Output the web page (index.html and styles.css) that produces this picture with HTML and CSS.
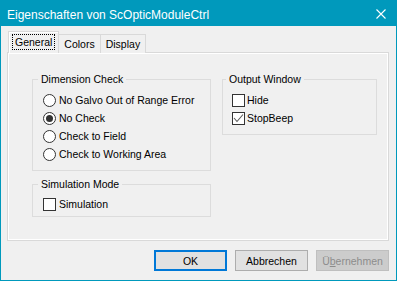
FILE: index.html
```html
<!DOCTYPE html>
<html lang="de">
<head>
  <meta charset="UTF-8">
  <title>Eigenschaften von ScOpticModuleCtrl</title>
  <link rel="stylesheet" href="styles.css">
</head>
<body>
  <div class="window">
    <div class="titlebar">
      <span class="title">Eigenschaften von ScOpticModuleCtrl</span>
      <svg class="close" width="10" height="10" viewBox="0 0 10 10">
        <path d="M0.5 0.5 L9.5 9.5 M9.5 0.5 L0.5 9.5" stroke="#fff" stroke-width="1.1" fill="none"/>
      </svg>
    </div>

    <div class="body">
      <div class="tabs">
        <div class="tab active"><span class="focus">General</span></div>
        <div class="tab">Colors</div>
        <div class="tab">Display</div>
      </div>

      <div class="page">
        <div class="col col-left">
          <fieldset class="group group-dim">
            <legend>Dimension Check</legend>
            <div class="opt"><span class="radio"></span>No Galvo Out of Range Error</div>
            <div class="opt"><span class="radio checked"></span>No Check</div>
            <div class="opt"><span class="radio"></span>Check to Field</div>
            <div class="opt"><span class="radio"></span>Check to Working Area</div>
          </fieldset>

          <fieldset class="group group-sim">
            <legend>Simulation Mode</legend>
            <div class="opt"><span class="check"></span>Simulation</div>
          </fieldset>
        </div>

        <div class="col col-right">
          <fieldset class="group group-out">
            <legend>Output Window</legend>
            <div class="opt"><span class="check"></span>Hide</div>
            <div class="opt">
              <span class="check">
                <svg width="11" height="11" viewBox="0 0 11 11">
                  <polyline points="1,5 4,8.5 10,1.5" stroke="#5a5a5a" stroke-width="1.1" fill="none"/>
                </svg>
              </span>StopBeep
            </div>
          </fieldset>
        </div>
      </div>

      <div class="buttons">
        <button class="btn btn-default">OK</button>
        <button class="btn">Abbrechen</button>
        <button class="btn" disabled>&Uuml;<u>b</u>ernehmen</button>
      </div>
    </div>
  </div>
</body>
</html>
```

FILE: styles.css
```css
* {
  box-sizing: border-box;
}

body {
  margin: 0;
  font-family: "Liberation Sans", Arial, sans-serif;
  font-size: 10.5px;
  color: #000;
}

.window {
  width: 397px;
  height: 281px;
  border: 1px solid #0099bc;
  background: #f0f0f0;
  display: flex;
  flex-direction: column;
}

.titlebar {
  height: 25px;
  background: #0099bc;
  color: #fff;
  display: flex;
  align-items: center;
  justify-content: space-between;
  padding: 2px 10px 0 6px;
  font-size: 12px;
}

.close {
  display: block;
  margin-top: -2px;
}

.body {
  padding: 6px 7px 0 6px;
}

/* tab strip */
.tabs {
  display: flex;
  align-items: flex-end;
  height: 21px;
  padding-left: 1px;
  margin-bottom: -1px;
  position: relative;
  z-index: 1;
}

.tab {
  height: 19px;
  line-height: 18px;
  padding: 0 5px;
  border: 1px solid #d9d9d9;
  border-bottom: none;
  background: #f0f0f0;
  margin-left: -1px;
}

.tab.active {
  height: 22px;
  padding: 1px 3px 0 3px;
  margin-left: 0;
  margin-right: -1px;
  background: #f0f0f0;
  box-shadow: inset 1px 1px 0 #fff;
}

.tab.active + .tab {
  margin-left: 0;
}

.focus {
  display: inline-block;
  line-height: 14px;
  padding: 0 2px;
  border: 1px dotted #000;
}

/* tab page */
.page {
  width: 382px;
  height: 189px;
  border: 1px solid #d9d9d9;
  box-shadow: inset 1px 1px 0 #fff, inset -1px -1px 0 #fff;
  display: flex;
  gap: 11px;
  padding: 20px 0 0 24px;
}

.col {
  display: flex;
  flex-direction: column;
  gap: 7px;
}

.col-left {
  width: 179px;
}

.col-right {
  width: 155px;
}

.group {
  margin: 0;
  border: 1px solid #dcdcdc;
  padding: 5px 0 7px 10px;
  min-width: 0;
}

.group legend {
  padding: 0 3px;
  margin-left: -5px;
  line-height: 13px;
}

.group-sim {
  padding-top: 4px;
  padding-bottom: 3px;
}

.group-out {
  padding-left: 9px;
}

.group-out legend {
  margin-left: -6px;
}

.opt {
  display: flex;
  align-items: center;
  height: 18px;
  white-space: nowrap;
}

.radio {
  width: 13px;
  height: 13px;
  border: 1px solid #333;
  border-radius: 50%;
  background: #fff;
  margin-right: 3px;
  display: flex;
  align-items: center;
  justify-content: center;
}

.radio.checked::after {
  content: "";
  width: 7px;
  height: 7px;
  border-radius: 50%;
  background: #333;
}

.check {
  width: 13px;
  height: 13px;
  border: 1px solid #333;
  background: #fff;
  margin-right: 3px;
  display: flex;
}

.group-out .check {
  margin-right: 2px;
}

/* dialog buttons */
.buttons {
  width: 382px;
  display: flex;
  justify-content: flex-end;
  gap: 8px;
  margin-top: 9px;
}

.btn {
  width: 73px;
  height: 21px;
  font-family: inherit;
  font-size: 10.5px;
  color: #000;
  background: #e1e1e1;
  border: 1px solid #adadad;
  padding: 0;
}

.btn-default {
  border: 2px solid #0078d7;
}

.btn:disabled {
  background: #cccccc;
  border-color: #bfbfbf;
  color: #8c8c8c;
}
```
